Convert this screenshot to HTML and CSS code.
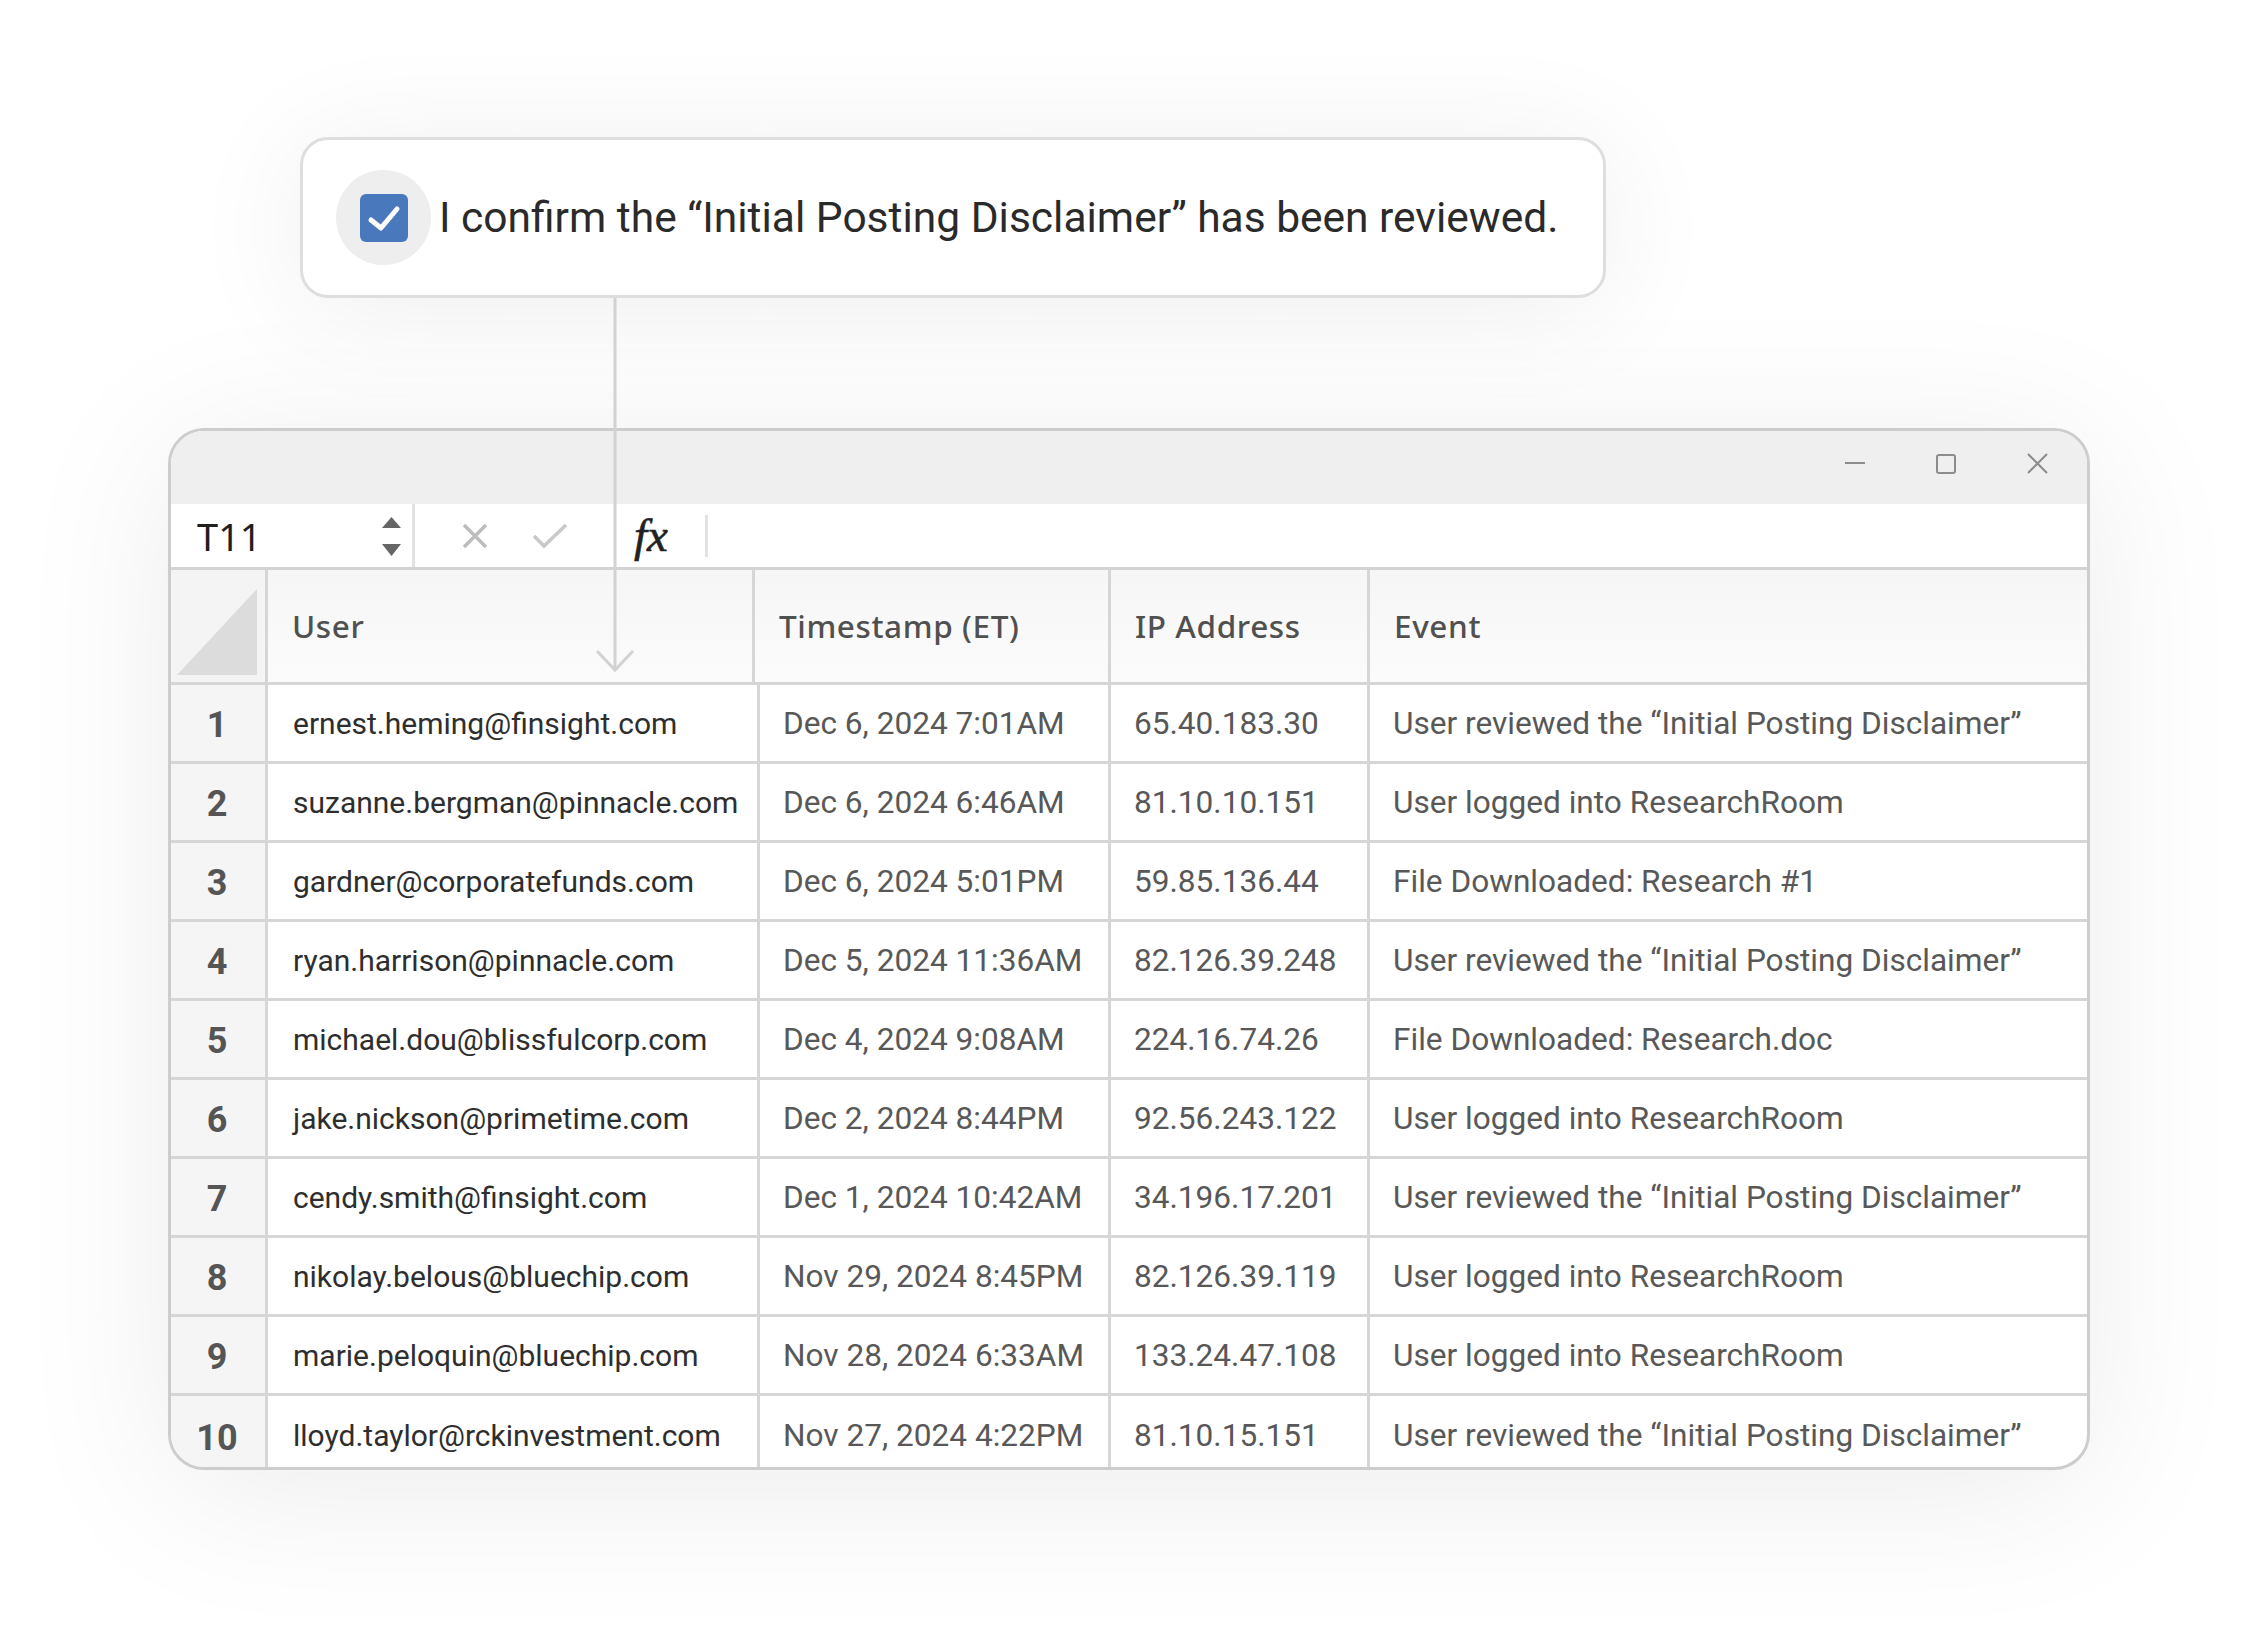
FILE: index.html
```html
<!DOCTYPE html>
<html lang="en">
<head>
<meta charset="utf-8">
<title>Audit log</title>
<link rel="stylesheet" href="styles.css">
</head>
<body>
<div class="stage">
  <div class="confirm-card">
    <span class="check-halo">
      <span class="checkbox">
        <svg width="48" height="48" viewBox="0 0 48 48"><polyline points="11,26 21,34 37,15" fill="none" stroke="#fff" stroke-width="5" stroke-linecap="round" stroke-linejoin="round"/></svg>
      </span>
    </span>
    <span class="confirm-text">I confirm the “Initial Posting Disclaimer” has been reviewed.</span>
  </div>

  <div class="window">
    <div class="titlebar">
      <svg class="win-ctl" width="22" height="22" viewBox="0 0 22 22"><line x1="1" y1="10" x2="21" y2="10" stroke="#8c8c8c" stroke-width="2"/></svg>
      <svg class="win-ctl" width="22" height="22" viewBox="0 0 22 22"><rect x="2" y="2" width="18" height="18" rx="2" fill="none" stroke="#8c8c8c" stroke-width="2"/></svg>
      <svg class="win-ctl" width="22" height="22" viewBox="0 0 22 22"><path d="M2 1 L21 20 M21 1 L2 20" stroke="#8c8c8c" stroke-width="2" fill="none"/></svg>
    </div>

    <div class="formula-bar">
      <div class="name-box">
        <span class="name">T11</span>
        <svg width="20" height="40" viewBox="0 0 20 40"><polygon points="0,12 9.5,1 19,12" fill="#666"/><polygon points="0,28 9.5,40 19,28" fill="#666"/></svg>
      </div>
      <div class="fx-actions">
        <svg width="26" height="26" viewBox="0 0 26 26"><path d="M2 2 L24 24 M24 2 L2 24" stroke="#bdbdbd" stroke-width="3.5" fill="none"/></svg>
        <svg class="ok" width="36" height="26" viewBox="0 0 36 26"><polyline points="2,13 12,23 34,2" fill="none" stroke="#c9c9c9" stroke-width="3.5"/></svg>
      </div>
      <span class="fx">fx</span>
      <span class="fx-sep"></span>
    </div>

    <div class="sheet">
      <div class="head-row">
        <div class="corner"><svg width="80" height="86" viewBox="0 0 80 86"><polygon points="0,86 80,86 80,0" fill="#dcdcdc"/></svg></div>
        <div class="hcell">User</div>
        <div class="hcell">Timestamp (ET)</div>
        <div class="hcell">IP Address</div>
        <div class="hcell">Event</div>
      </div>

      <div class="row"><div class="num">1</div><div class="cell user">ernest.heming@finsight.com</div><div class="cell">Dec 6, 2024 7:01AM</div><div class="cell">65.40.183.30</div><div class="cell">User reviewed the “Initial Posting Disclaimer”</div></div>
      <div class="row"><div class="num">2</div><div class="cell user">suzanne.bergman@pinnacle.com</div><div class="cell">Dec 6, 2024 6:46AM</div><div class="cell">81.10.10.151</div><div class="cell">User logged into ResearchRoom</div></div>
      <div class="row"><div class="num">3</div><div class="cell user">gardner@corporatefunds.com</div><div class="cell">Dec 6, 2024 5:01PM</div><div class="cell">59.85.136.44</div><div class="cell">File Downloaded: Research #1</div></div>
      <div class="row"><div class="num">4</div><div class="cell user">ryan.harrison@pinnacle.com</div><div class="cell">Dec 5, 2024 11:36AM</div><div class="cell">82.126.39.248</div><div class="cell">User reviewed the “Initial Posting Disclaimer”</div></div>
      <div class="row"><div class="num">5</div><div class="cell user">michael.dou@blissfulcorp.com</div><div class="cell">Dec 4, 2024 9:08AM</div><div class="cell">224.16.74.26</div><div class="cell">File Downloaded: Research.doc</div></div>
      <div class="row"><div class="num">6</div><div class="cell user">jake.nickson@primetime.com</div><div class="cell">Dec 2, 2024 8:44PM</div><div class="cell">92.56.243.122</div><div class="cell">User logged into ResearchRoom</div></div>
      <div class="row"><div class="num">7</div><div class="cell user">cendy.smith@finsight.com</div><div class="cell">Dec 1, 2024 10:42AM</div><div class="cell">34.196.17.201</div><div class="cell">User reviewed the “Initial Posting Disclaimer”</div></div>
      <div class="row"><div class="num">8</div><div class="cell user">nikolay.belous@bluechip.com</div><div class="cell">Nov 29, 2024 8:45PM</div><div class="cell">82.126.39.119</div><div class="cell">User logged into ResearchRoom</div></div>
      <div class="row"><div class="num">9</div><div class="cell user">marie.peloquin@bluechip.com</div><div class="cell">Nov 28, 2024 6:33AM</div><div class="cell">133.24.47.108</div><div class="cell">User logged into ResearchRoom</div></div>
      <div class="row last"><div class="num">10</div><div class="cell user">lloyd.taylor@rckinvestment.com</div><div class="cell">Nov 27, 2024 4:22PM</div><div class="cell">81.10.15.151</div><div class="cell">User reviewed the “Initial Posting Disclaimer”</div></div>
    </div>
  </div>

  <svg class="connector" width="40" height="376" viewBox="0 0 40 376">
    <line x1="19" y1="0" x2="19" y2="372" stroke="#d2d2d2" stroke-width="3"/>
    <polyline points="1,353 19,372 37,353" fill="none" stroke="#d2d2d2" stroke-width="3"/>
  </svg>
</div>
</body>
</html>
```

FILE: styles.css
```css
html, body {
  margin: 0;
  padding: 0;
  background: #ffffff;
}

body {
  font-family: Roboto, "Liberation Sans", sans-serif;
}

.stage {
  position: relative;
  width: 2258px;
  height: 1638px;
  padding-top: 137px;
  box-sizing: border-box;
  overflow: hidden;
}

/* confirmation card */
.confirm-card {
  margin-left: 300px;
  width: 1306px;
  height: 161px;
  box-sizing: border-box;
  border: 3px solid #dedede;
  border-radius: 28px;
  background: #ffffff;
  display: flex;
  align-items: center;
  gap: 8px;
  padding-left: 33px;
  box-shadow: 0 10px 120px rgba(0, 0, 0, 0.07);
}

.check-halo {
  flex: none;
  width: 95px;
  height: 95px;
  border-radius: 50%;
  background: #eeeeee;
  display: flex;
  align-items: center;
  justify-content: center;
}

.checkbox {
  width: 48px;
  height: 48px;
  border-radius: 6px;
  background: #4a78bd;
  display: flex;
}

.confirm-text {
  font-size: 42.5px;
  color: #2a2a2a;
  white-space: nowrap;
}

/* spreadsheet window */
.window {
  margin: 130px 0 0 168px;
  width: 1922px;
  height: 1042px;
  box-sizing: border-box;
  border: 3px solid #cdcdcd;
  border-radius: 36px;
  overflow: hidden;
  background: #ffffff;
  box-shadow: 0 20px 160px rgba(0, 0, 0, 0.08);
}

.titlebar {
  height: 73px;
  box-sizing: border-box;
  background: #efefef;
  display: flex;
  justify-content: flex-end;
  align-items: flex-start;
  gap: 69px;
  padding: 22px 39px 0 0;
}

.win-ctl {
  display: block;
}

.formula-bar {
  height: 66px;
  box-sizing: border-box;
  border-bottom: 3px solid #d3d3d3;
  display: flex;
  align-items: center;
}

.name-box {
  width: 244px;
  height: 100%;
  box-sizing: border-box;
  border-right: 3px solid #e3e3e3;
  display: flex;
  align-items: center;
  justify-content: space-between;
  padding: 0 10px 0 26px;
}

.name-box svg {
  display: block;
}

.name {
  font-family: "Noto Sans", "Open Sans", sans-serif;
  font-size: 38px;
  color: #1f1f1f;
}

.fx-actions {
  display: flex;
  align-items: center;
  margin-left: 47px;
}

.fx-actions svg {
  display: block;
}

.fx-actions .ok {
  margin-left: 44px;
}

.fx {
  margin-left: 66px;
  font-family: "Liberation Serif", "DejaVu Serif", serif;
  font-style: italic;
  font-size: 47px;
  color: #222222;
  line-height: 1;
  -webkit-text-stroke: 0.6px #222222;
}

.fx-sep {
  margin-left: 37px;
  width: 3px;
  height: 42px;
  background: #e2e2e2;
}

/* sheet grid */
.head-row {
  display: grid;
  grid-template-columns: 97px 487px 356px 259px 1fr;
  height: 115px;
  border-bottom: 3px solid #d6d6d6;
  box-sizing: border-box;
  background: linear-gradient(#f6f6f6, #fbfbfb);
}

.corner {
  background: #f4f4f4;
  border-right: 3px solid #d6d6d6;
  display: flex;
  align-items: flex-end;
  justify-content: flex-end;
  padding: 0 8px 7px 0;
}

.corner svg {
  display: block;
}

.hcell {
  border-right: 3px solid #d6d6d6;
  display: flex;
  align-items: center;
  padding-left: 24px;
  padding-bottom: 2px;
  font-family: "Noto Sans", "Open Sans", sans-serif;
  font-size: 31.5px;
  font-weight: 500;
  letter-spacing: 0.6px;
  color: #505050;
}

.hcell:last-child {
  border-right: none;
}

.row {
  display: grid;
  grid-template-columns: 97px 492px 351px 259px 1fr;
  height: 79px;
  box-sizing: border-box;
  border-bottom: 3px solid #d6d6d6;
}

.row.last {
  border-bottom: none;
}

.num {
  background: #f5f5f5;
  border-right: 3px solid #d6d6d6;
  display: flex;
  align-items: center;
  justify-content: center;
  padding: 4px 2px 0 0;
  font-size: 36px;
  font-weight: 700;
  color: #555555;
}

.cell {
  border-right: 3px solid #d6d6d6;
  display: flex;
  align-items: center;
  padding-left: 23px;
  font-size: 31.6px;
  color: #585858;
  white-space: nowrap;
}

.cell:last-child {
  border-right: none;
}

.cell.user {
  padding-left: 25px;
  font-size: 30px;
  color: #2e2e2e;
}

/* connector arrow overlaying the window */
.connector {
  position: absolute;
  left: 596px;
  top: 298px;
  z-index: 2;
}
```
